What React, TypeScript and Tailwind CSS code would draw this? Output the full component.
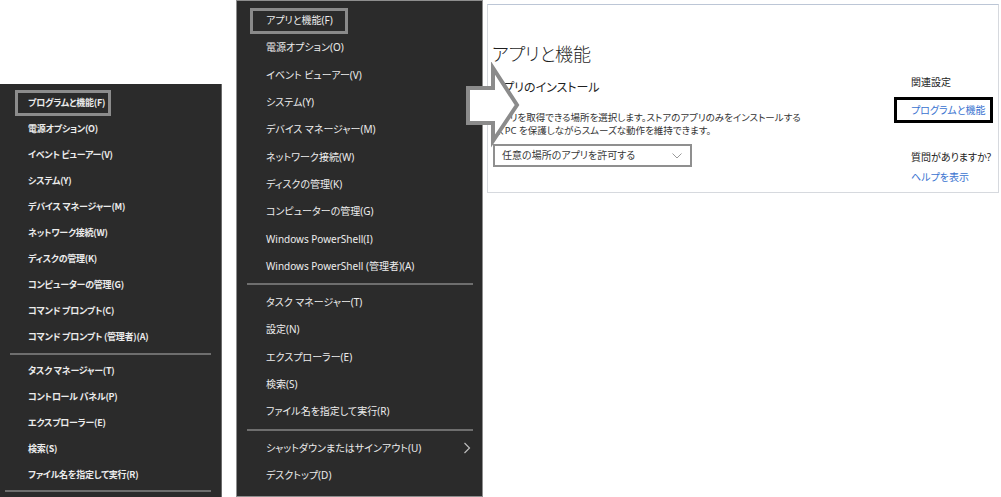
import React from 'react';

const leftA = ['電源オプション(O)', 'イベント ビューアー(V)', 'システム(Y)', 'デバイス マネージャー(M)', 'ネットワーク接続(W)', 'ディスクの管理(K)', 'コンピューターの管理(G)', 'コマンド プロンプト(C)', 'コマンド プロンプト (管理者)(A)'];
const leftB = ['タスク マネージャー(T)', 'コントロール パネル(P)', 'エクスプローラー(E)', '検索(S)', 'ファイル名を指定して実行(R)'];
const midA = ['電源オプション(O)', 'イベント ビューアー(V)', 'システム(Y)', 'デバイス マネージャー(M)', 'ネットワーク接続(W)', 'ディスクの管理(K)', 'コンピューターの管理(G)', 'Windows PowerShell(I)', 'Windows PowerShell (管理者)(A)'];
const midB = ['タスク マネージャー(T)', '設定(N)', 'エクスプローラー(E)', '検索(S)', 'ファイル名を指定して実行(R)'];

function LeftItem({ t }: { t: string }) {
  return <div className="h-[26px] flex items-center pl-[28px] whitespace-nowrap">{t}</div>;
}
function MidItem({ t, chevron }: { t: string; chevron?: boolean }) {
  return (
    <div className="h-[27.3px] flex items-center pl-[29px] pr-[10px] whitespace-nowrap justify-between">
      <span>{t}</span>
      {chevron && (
        <svg width="8" height="12" viewBox="0 0 8 12" className="mr-[1px]">
          <polyline points="1.5,1 6.5,6 1.5,11" fill="none" stroke="#bdbdbd" strokeWidth="1.2" />
        </svg>
      )}
    </div>
  );
}

export default function App() {
  return (
    <div className="relative w-[1001px] h-[497px] bg-white overflow-hidden font-['Noto_Sans','Noto_Sans_CJK_JP',sans-serif] [font-feature-settings:'palt']">
      {/* Left menu */}
      <div className="absolute left-0 top-[84px] w-[222px] h-[413px] bg-[#2b2b2b] border-r border-[#6b6b6b] text-[#ececec] text-[9px] font-semibold tracking-[-0.25px] flex flex-col pt-[6px] font-['Noto_Sans_CJK_JP',sans-serif]">
        <div className="h-[26px] flex items-center">
          <div className="ml-[15px] w-[96px] h-[26px] border-[3px] border-[#8c8c8c] flex items-center pl-[10px] whitespace-nowrap">プログラムと機能(F)</div>
        </div>
        {leftA.map((t) => <LeftItem key={t} t={t} />)}
        <div className="h-[8px] flex items-center px-[10px]"><div className="h-[2px] w-full bg-[#6e6e6e]" /></div>
        {leftB.map((t) => <LeftItem key={t} t={t} />)}
        <div className="h-[6px] flex items-center pl-[5px] pr-[10px]"><div className="h-[2px] w-full bg-[#6e6e6e]" /></div>
      </div>

      {/* Middle menu */}
      <div className="absolute left-[236px] top-0 w-[247px] h-[497px] bg-[#2b2b2b] border border-[#8e8e8e] text-[#ededed] text-[10px] flex flex-col pt-[6px]">
        <div className="h-[27.3px] flex items-center">
          <div className="ml-[13px] w-[98px] h-[26px] border-[3px] border-[#8a8a8a] flex items-center pl-[13px] whitespace-nowrap">アプリと機能(F)</div>
        </div>
        {midA.map((t) => <MidItem key={t} t={t} />)}
        <div className="h-[9px] flex items-center pl-[10px] pr-[9px]"><div className="h-[2px] w-full bg-[#6e6e6e]" /></div>
        {midB.map((t) => <MidItem key={t} t={t} />)}
        <div className="h-[9px] flex items-center pl-[10px] pr-[9px]"><div className="h-[2px] w-full bg-[#6e6e6e]" /></div>
        <MidItem t="シャットダウンまたはサインアウト(U)" chevron />
        <MidItem t="デスクトップ(D)" />
      </div>

      {/* Settings panel */}
      <div className="absolute left-[487px] top-[4px] w-[512px] h-[189px] bg-white border border-[#d6d9de] border-t-[#bcc6d6] flex">
        <div className="flex-1 flex flex-col pl-[4px] pt-[37px] text-[#1f1f1f]">
          <div className="text-[18px] leading-[24px] font-light tracking-[-0.2px]">アプリと機能</div>
          <div className="text-[12px] leading-[18px] mt-[13px]">アプリのインストール</div>
          <div className="text-[9.5px] leading-[13px] mt-[14px] text-[#333]">
            <div>アプリを取得できる場所を選択します。ストアのアプリのみをインストールする</div>
            <div>と、PC を保護しながらスムーズな動作を維持できます。</div>
          </div>
          <div className="mt-[7px] ml-[1px] w-[199px] h-[23px] border-2 border-[#8f8f8f] flex items-center justify-between pl-[7px] pr-[8px] text-[10px] text-[#3a3a3a]">
            <span>任意の場所のアプリを許可する</span>
            <svg width="10" height="6" viewBox="0 0 10 6">
              <polyline points="0.5,0.5 5,5 9.5,0.5" fill="none" stroke="#9a9a9a" strokeWidth="1" />
            </svg>
          </div>
        </div>
        <div className="w-[103px] flex flex-col pt-[70px] text-[10px]">
          <div className="pl-[16px] leading-[14px] text-[#222]">関連設定</div>
          <div className="mt-[8px] -ml-[1px] w-[99px] h-[26px] border-[3px] border-black flex items-center pl-[14px] text-[#3a73d0] whitespace-nowrap">プログラムと機能</div>
          <div className="mt-[27px] pl-[16px] leading-[14px] text-[#222]">質問がありますか?</div>
          <div className="mt-[6px] pl-[16px] leading-[14px] text-[#3a73d0]">ヘルプを表示</div>
        </div>
      </div>

      {/* Arrow */}
      <svg className="absolute left-[462px] top-[62px]" width="64" height="86" viewBox="462 62 64 86">
        <polygon points="468,88 493,88 493,68 517,105 493,141 493,123 468,123" fill="white" stroke="#8b8b8b" strokeWidth="4" strokeLinejoin="miter" />
      </svg>
    </div>
  );
}
